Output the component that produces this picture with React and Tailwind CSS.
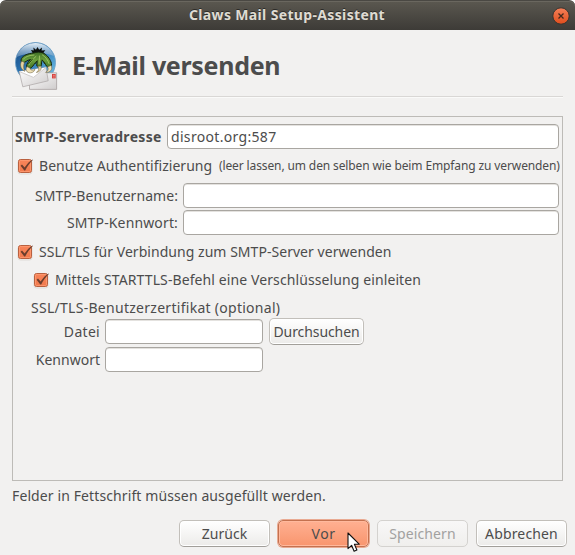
import React from 'react';

function Entry({ className = '', children }) {
  return (
    <div className={`h-[25px] shrink-0 rounded-[4px] border border-[#a9a6a1] bg-white px-[3px] leading-[23px] shadow-[inset_0_1px_0_#e4e2df] ${className}`}>
      {children}
    </div>
  );
}

function Check({ className = '' }) {
  return (
    <svg className={`h-[17px] w-[18px] shrink-0 ${className}`} viewBox="0 0 18 17">
      <defs>
        <linearGradient id="box" x1="0" y1="0" x2="0" y2="1">
          <stop offset="0" stopColor="#f9855a" />
          <stop offset="1" stopColor="#f0794c" />
        </linearGradient>
      </defs>
      <rect x="1" y="2" width="14" height="14" rx="2.5" fill="none" stroke="#dedbd7" />
      <rect x="1.5" y="1.5" width="13" height="13" rx="2" fill="url(#box)" stroke="#b9603f" />
      <rect x="2.5" y="2.5" width="11" height="11" rx="1" fill="none" stroke="#ff9f77" strokeOpacity="0.7" />
      <path d="M3.6 7.8 L5 6.6 L7.6 9.6 C9.8 6 12.6 3 15.6 1.4 L15.9 2 C12.9 4.8 10.2 8.4 8.2 12.4 L7.3 12.4 Z" fill="#6b3d2c" />
    </svg>
  );
}

function Logo() {
  return (
    <svg className="h-12 w-[43px] shrink-0" viewBox="0 0 43 48">
      <defs>
        <linearGradient id="globe" x1="0" y1="0" x2="1" y2="1">
          <stop offset="0" stopColor="#16437a" />
          <stop offset="0.45" stopColor="#2c76b4" />
          <stop offset="1" stopColor="#7fd0f2" />
        </linearGradient>
        <linearGradient id="shine" x1="0" y1="0" x2="0" y2="1">
          <stop offset="0" stopColor="#e4eff7" />
          <stop offset="1" stopColor="#86a9ca" stopOpacity="0.55" />
        </linearGradient>
        <linearGradient id="toe" x1="0" y1="0" x2="0" y2="1">
          <stop offset="0" stopColor="#3f6f25" />
          <stop offset="0.5" stopColor="#6a9f3c" />
          <stop offset="1" stopColor="#426f22" />
        </linearGradient>
        <linearGradient id="paper" x1="0" y1="0" x2="1" y2="1">
          <stop offset="0" stopColor="#ffffff" />
          <stop offset="1" stopColor="#cfcccc" />
        </linearGradient>
      </defs>
      <circle cx="20.5" cy="20.5" r="20" fill="url(#globe)" stroke="#689dc4" strokeWidth="0.8" />
      <path d="M1.6 15 C5 4.5 13 1 20.5 1 C29 1 36 6 39 14 C28 9.5 13 10 1.6 15Z" fill="url(#shine)" />
      <path d="M14.5 30.8 H41.6 V47.4 H14.5 Z" fill="url(#paper)" stroke="#a19a9a" strokeWidth="0.7" />
      <path d="M4.2 29.5 L31 25.5 L33.2 38.8 L7.8 44.8 Z" fill="url(#paper)" stroke="#a9a4a3" strokeWidth="0.7" />
      <path d="M4.2 29.5 L18.5 35.4 L31 25.5" fill="#fff" stroke="#cbc7c7" strokeWidth="0.9" />
      <rect x="37" y="32" width="3.7" height="4.4" fill="#d8433e" />
      <path d="M38 33.4 H39.8 M38 35 H39.8" stroke="#f2b4b0" strokeWidth="0.6" />
      <path d="M17.5 10.8 L16 8 L18.8 8.6 L18.3 5.4 L21 7.8 L22.4 5 L24.2 7.8 L27 5.6 L26.6 8.6 L30.3 8.2 L28.5 10.6 L30 14 L18 14Z" fill="#0c0f0d" />
      <path d="M18.5 11 C13 11.5 8 13.5 6.4 16.6 C5.6 18.6 6.2 20.4 8 20.6 C10.5 20.5 11.5 18.3 15.5 17.5 C13.5 19.5 11.6 21.8 11.6 24 C11.6 26.6 14.2 27.3 16.2 25.8 C18.6 23.8 19.5 21 22 19.2 C22.5 21 21.3 22.6 22 24.2 C22.8 25.8 25.6 25.6 26.3 23.6 C26.8 21.8 26.2 20 27 18.2 C29.5 19.5 30 22 31.4 24 C33 26 36 25.5 36.5 23 C36.8 19.5 33 13.5 28.6 11.2 C25 9.6 21.5 10 18.5 11Z" fill="url(#toe)" stroke="#14250d" strokeWidth="1" />
      <path d="M19 13 C14.5 13.3 10.5 14.6 8.6 16.8 M21 14.4 C17.5 17.5 14.7 20.2 14 23 M24.5 14 C24.8 17 24 19.5 24 22 M27.5 13 C31 15 33 18.5 34 21.5" fill="none" stroke="#9cc364" strokeWidth="1" strokeLinecap="round" />
      <path d="M17.6 17 L13.4 22 M22.6 18.4 L20.4 22 M27 17.5 L29.8 22" fill="none" stroke="#21390f" strokeWidth="0.9" />
      <path d="M6.8 19 C4.6 22 5.2 26.6 9.6 29.4 C8.6 26.6 8.2 24 9.4 20.6Z" fill="#e6d3a0" stroke="#5f5230" strokeWidth="0.5" />
      <path d="M12 24.6 C9.6 28 12 31 15.6 30.8 C18 30.6 19.4 29.2 20 27.4 C17.6 28.8 15.4 28.4 15.2 26.2Z" fill="#efe0b5" stroke="#5f5230" strokeWidth="0.5" />
      <path d="M22.4 24.4 C24.4 26 24.2 28.4 21.4 30.4 C25 30 26.8 27.4 26 24Z" fill="#e6d3a0" stroke="#5f5230" strokeWidth="0.5" />
      <path d="M36.2 23.4 C38 27.4 35.4 30.6 30.6 30.4 C33.2 29 33.8 27.4 32.6 24.8Z" fill="#efe0b5" stroke="#5f5230" strokeWidth="0.5" />
    </svg>
  );
}

function Button({ className = '', children }) {
  return (
    <button className={`flex h-[27px] shrink-0 items-center justify-center rounded-[5px] border whitespace-nowrap ${className}`}>
      {children}
    </button>
  );
}

const plain = 'border-[#c2bfba] border-b-[#a29f9a] bg-linear-to-b from-white to-[#ecebe9] shadow-[inset_0_0_0_1px_#fff]';

export default function App() {
  return (
    <div className="h-[555px] w-[575px] overflow-hidden bg-white font-['Noto_Sans',sans-serif] text-[14px] leading-[20px] whitespace-nowrap text-[#4c4c4c]">
      <div className="flex h-full flex-col rounded-t-[6px] bg-[#f2f1f0]">
        <header className="flex h-[30px] shrink-0 items-center rounded-t-[6px] border-t border-[#4a4843] bg-linear-to-b from-[#5b5850] to-[#3d3b37] pr-[5px] shadow-[inset_0_1px_0_#6a675f]">
          <h1 className="w-[552px] pb-[2px] pl-[189px] text-[14px] font-bold tracking-[0.35px] text-[#dfdbd2] [text-shadow:0_-1px_0_#2c2b28]">Claws Mail Setup-Assistent</h1>
          <svg className="h-[18px] w-[18px] shrink-0" viewBox="0 0 18 18">
            <defs>
              <linearGradient id="close" x1="0" y1="0" x2="0" y2="1">
                <stop offset="0" stopColor="#f68059" />
                <stop offset="1" stopColor="#df4d1c" />
              </linearGradient>
            </defs>
            <circle cx="9" cy="9" r="8.2" fill="url(#close)" stroke="#35332f" />
            <path d="M6.5 6.5 L11.5 11.5 M11.5 6.5 L6.5 11.5" stroke="#42281d" strokeWidth="1.3" />
          </svg>
        </header>

        <div className="mx-3 flex h-[67px] shrink-0 items-center gap-[14px] border-b border-[#d9d7d5] pl-[3px] pt-[6px] shadow-[0_1px_0_#fafaf9]">
          <Logo />
          <h2 className="pb-[3px] text-[25px] leading-[30px] font-bold tracking-[-0.3px]">E-Mail versenden</h2>
        </div>

        <main className="mx-3 mt-[19px] flex h-[365px] shrink-0 flex-col border border-[#bdbbb7] pl-[2px]">
          <div className="mt-[7px] flex h-[25px] items-center">
            <span className="w-[152px] font-bold tracking-[0.33px]">SMTP-Serveradresse</span>
            <Entry className="w-[392px] tracking-[0.32px]">disroot.org:587</Entry>
          </div>
          <div className="mt-[7px] flex h-5 items-center">
            <Check className="ml-[2px]" />
            <span className="ml-[4px] w-[180px] tracking-[0.04px]">Benutze Authentifizierung</span>
            <span className="text-[12px] tracking-[-0.12px]">(leer lassen, um den selben wie beim Empfang zu verwenden)</span>
          </div>
          <div className="mt-[7px] flex h-[25px] items-center">
            <span className="mr-[5px] w-[163px] text-right tracking-[0.06px]">SMTP-Benutzername:</span>
            <Entry className="w-[376px]" />
          </div>
          <div className="mt-[2px] flex h-[25px] items-center">
            <span className="mr-[5px] w-[163px] text-right tracking-[0.14px]">SMTP-Kennwort:</span>
            <Entry className="w-[376px]" />
          </div>
          <div className="mt-[7px] flex h-5 items-center">
            <Check className="ml-[2px]" />
            <span className="ml-[4px] tracking-[0.04px]">SSL/TLS für Verbindung zum SMTP-Server verwenden</span>
          </div>
          <div className="mt-[8px] flex h-5 items-center">
            <Check className="ml-[18px]" />
            <span className="ml-[4px] tracking-[0.1px]">Mittels STARTTLS-Befehl eine Verschlüsselung einleiten</span>
          </div>
          <div className="mt-[8px] h-5 pl-[16px] tracking-[0.28px]">SSL/TLS-Benutzerzertifikat (optional)</div>
          <div className="flex h-[27px] items-center">
            <span className="mr-[5px] w-[85px] text-right tracking-[0.3px]">Datei</span>
            <Entry className="w-[158px]" />
            <Button className={`ml-[6px] w-[95px] tracking-[-0.08px] ${plain}`}>Durchsuchen</Button>
          </div>
          <div className="mt-[2px] flex h-[25px] items-center">
            <span className="mr-[5px] w-[85px] text-right">Kennwort</span>
            <Entry className="w-[158px]" />
          </div>
        </main>

        <p className="mt-[5px] pl-[12px] tracking-[0.11px]">Felder in Fettschrift müssen ausgefüllt werden.</p>

        <footer className="relative mt-[14px] flex pl-[179px]">
          <Button className={`w-[91px] ${plain}`}>Zurück</Button>
          <Button className="ml-[8px] w-[91px] border-[#c4714f] bg-linear-to-b from-[#ffb092] to-[#f8956d] tracking-[0.5px] shadow-[inset_0_0_0_1px_#ffb99d,0_0_0_1px_#e9aa92]">Vor</Button>
          <Button className="ml-[8px] w-[91px] border-[#d4d2cf] bg-linear-to-b from-[#f8f7f7] to-[#f0efed] tracking-[0.1px] text-[#a2a1a0]">Speichern</Button>
          <Button className={`ml-[8px] w-[91px] tracking-[0.15px] ${plain}`}>Abbrechen</Button>
          <svg className="absolute top-[12px] left-[347px] h-[21px] w-[14px]" viewBox="0 0 14 21">
            <path d="M1 1 V16.6 L4.6 13.3 L7.1 19.2 L9.9 18 L7.4 12.2 H12.2 Z" fill="#fff" stroke="#111" strokeWidth="1.1" strokeLinejoin="round" />
          </svg>
        </footer>
      </div>
    </div>
  );
}
